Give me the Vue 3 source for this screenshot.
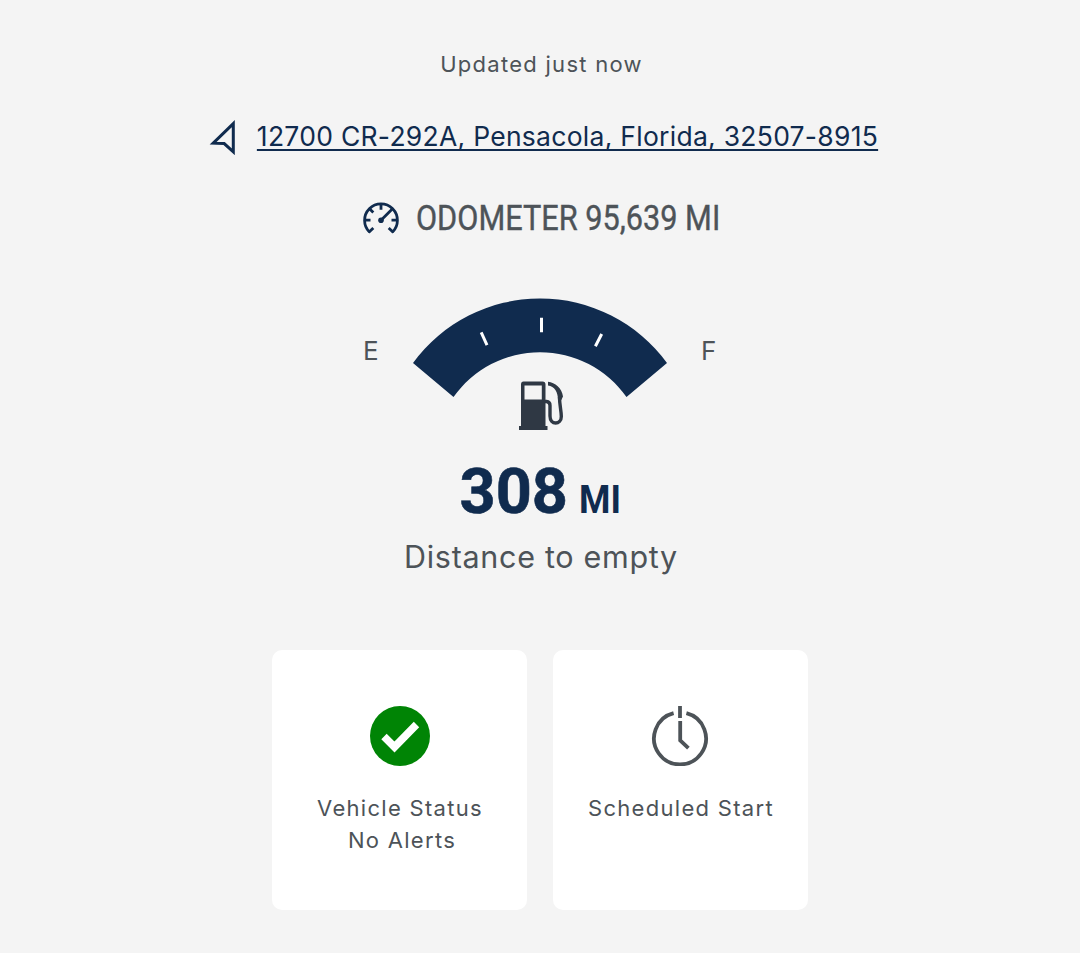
<template>
  <div class="vehicle-panel">
    <div class="updated">Updated just now</div>

    <div class="location">
      <svg class="location-icon" viewBox="0 0 28 38">
        <path d="M24.3 6.6 L4.2 26.2 L15.2 26.6 L24.3 34.8 Z" />
      </svg>
      <a class="address" href="#" @click.prevent>{{ vehicle.address }}</a>
    </div>

    <div class="odometer">
      <svg class="odometer-icon" viewBox="0 0 38 34">
        <path d="M7.5 31 A16.4 16.4 0 1 1 30.5 31" />
        <path d="M6.6 31.5 L11.3 27 M31.4 31.5 L26.7 27" />
        <path d="M3 19.2 H8.5 M35 19.2 H29.5 M19 3 V8.8 M7.5 7.7 L11.3 11.5 M19 19.2 L30 8.2" />
        <circle cx="19" cy="19.2" r="2.8" />
      </svg>
      <div class="odometer-slot">
        <span class="odometer-text">ODOMETER {{ vehicle.odometer }} MI</span>
      </div>
    </div>

    <div class="gauge">
      <span class="mark">E</span>
      <svg class="gauge-dial" viewBox="413 298 254 134">
        <path
          class="band"
          d="M413 363 A157.3 157.3 0 0 1 667 363 L626.5 397 A106 106 0 0 0 453.5 397 Z"
        />
        <path class="tick" d="M481.2 332.3 L487 345.2 M541.5 317.7 V332.3 M601.7 334 L595.4 346.2" />
        <g class="pump">
          <path
            fill-rule="evenodd"
            d="M523.5 381.5 H542.5 Q545.5 381.5 545.5 384.5 V426 H547.5 V430 H519 V426 H521 V384.5 Q521 381.5 523.5 381.5 Z M524.5 385.5 V399.5 H541.8 V385.5 Z"
          />
          <path
            class="hose"
            d="M545 401.5 H546.5 Q550 401.8 550 405.5 V416 C550 425.5 561.3 425 561.3 416.5 C561.3 411 559.5 405 559.5 397"
          />
          <path d="M548 381.8 C555 382.5 562 388 563 396.5 L561.3 400 H558 C558 392 554.5 386.5 548 385.6 Z" />
        </g>
      </svg>
      <span class="mark">F</span>
    </div>

    <div class="range">
      <span class="range-value">{{ vehicle.range }}</span>
      <span class="range-unit">MI</span>
    </div>
    <div class="range-label">Distance to empty</div>

    <div class="cards">
      <div class="card">
        <svg class="card-icon" viewBox="0 0 60 60">
          <circle cx="30" cy="30" r="30" fill="#008405" />
          <path d="M14 30.5 L24.5 41 L46.5 18.5" stroke="#ffffff" stroke-width="7.6" fill="none" />
        </svg>
        <div class="card-text">Vehicle Status</div>
        <div class="card-text alerts">No Alerts</div>
      </div>

      <div class="card">
        <svg class="card-icon clock" viewBox="0 0 60 60">
          <path d="M22.6 7.2 A26 26 0 1 0 35.4 7.2" />
          <path d="M29 0 V12" />
          <path d="M29.2 15 V34.4 L37.4 42.2" />
        </svg>
        <div class="card-text">Scheduled Start</div>
      </div>
    </div>
  </div>
</template>

<script setup>
import { ref } from 'vue'

const vehicle = ref({
  address: '12700 CR-292A, Pensacola, Florida, 32507-8915',
  odometer: '95,639',
  range: 308
})
</script>

<style>
body {
  margin: 0;
  background: #f4f4f4;
}
</style>

<style scoped>
.vehicle-panel {
  display: flex;
  flex-direction: column;
  align-items: center;
  box-sizing: border-box;
  height: 953px;
  padding-top: 48px;
  background: #f4f4f4;
  color: #4d5358;
  font-family: Inter, "Liberation Sans", sans-serif;
  white-space: nowrap;
}

.updated {
  height: 32px;
  margin-left: 3px;
  line-height: 32px;
  font-size: 22px;
  letter-spacing: 1.28px;
}

.location {
  display: flex;
  align-items: center;
  gap: 20px;
  height: 40px;
  margin-top: 36px;
  margin-left: 7px;
}

.location-icon {
  width: 28px;
  height: 38px;
  fill: none;
  stroke: #102b4e;
  stroke-width: 3;
}

.address {
  color: #102b4e;
  font-size: 26.5px;
  letter-spacing: 0.27px;
  text-decoration: underline;
  text-decoration-thickness: 1.5px;
  text-decoration-skip-ink: none;
  text-underline-offset: 3px;
}

.odometer {
  display: flex;
  align-items: center;
  gap: 16px;
  height: 40px;
  margin-top: 42px;
  margin-left: 3px;
}

.odometer-icon {
  width: 38px;
  height: 34px;
  fill: none;
  stroke: #102b4e;
  stroke-width: 2.8;
}

.odometer-icon circle {
  fill: #102b4e;
  stroke: none;
}

.odometer-slot {
  width: 305px;
}

.odometer-text {
  display: inline-block;
  font-family: Roboto, "Liberation Sans", sans-serif;
  font-size: 35px;
  -webkit-text-stroke: 0.4px #4d5358;
  transform: scaleX(0.877);
  transform-origin: left center;
}

.gauge {
  display: grid;
  grid-template-columns: 16px 254px 16px;
  column-gap: 34px;
  height: 134px;
  margin-top: 60px;
}

.mark {
  margin-top: 37px;
  line-height: 32px;
  font-size: 26px;
}

.gauge-dial {
  width: 254px;
  height: 134px;
}

.band {
  fill: #102b4e;
}

.tick {
  fill: none;
  stroke: #ffffff;
  stroke-width: 3;
}

.pump {
  fill: #2f3844;
}

.hose {
  fill: none;
  stroke: #2f3844;
  stroke-width: 3.4;
}

.range {
  display: flex;
  align-items: baseline;
  gap: 11px;
  height: 70px;
  margin-top: 25px;
  margin-left: 4px;
  line-height: 70px;
  color: #102b4e;
  font-family: Roboto, "Liberation Sans", sans-serif;
  font-weight: 700;
}

.range-value {
  font-size: 63px;
  -webkit-text-stroke: 0.6px #102b4e;
}

.range-unit {
  font-size: 39px;
  transform: scaleX(0.92);
  transform-origin: left center;
}

.range-label {
  height: 40px;
  margin-top: 10px;
  margin-left: 2px;
  line-height: 40px;
  font-size: 30.5px;
  letter-spacing: 0.7px;
}

.cards {
  display: flex;
  gap: 26px;
  margin-top: 73px;
}

.card {
  display: flex;
  flex-direction: column;
  align-items: center;
  box-sizing: border-box;
  width: 255px;
  height: 260px;
  padding-top: 56px;
  background: #ffffff;
  border-radius: 10px;
}

.card-icon {
  width: 60px;
  height: 60px;
  margin-bottom: 26px;
}

.clock {
  fill: none;
  stroke: #4d5358;
  stroke-width: 3.8;
}

.card-text {
  margin-left: 1px;
  line-height: 32px;
  font-size: 22px;
  letter-spacing: 1.3px;
}

.alerts {
  margin-left: 5px;
}
</style>
